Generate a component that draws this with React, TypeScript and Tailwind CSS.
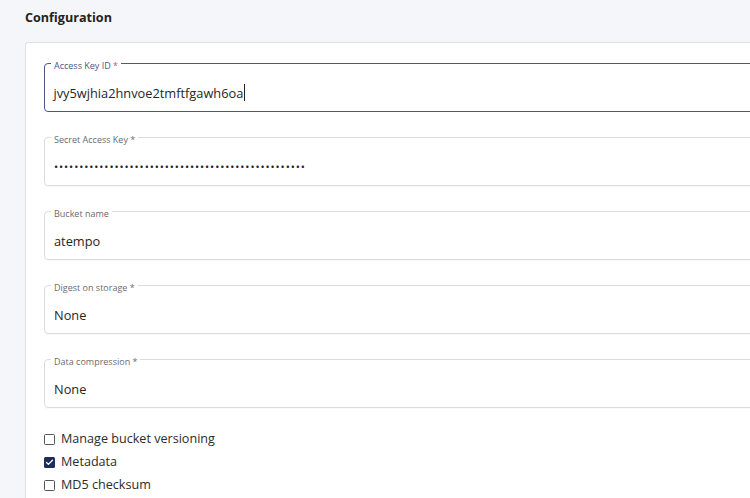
import { Check } from 'lucide-react';

type Field = {
  label: string;
  value: string;
  required?: boolean;
  focused?: boolean;
  secret?: boolean;
};

const FIELDS: Field[] = [
  { label: 'Access Key ID', value: 'jvy5wjhia2hnvoe2tmftfgawh6oa', required: true, focused: true },
  { label: 'Secret Access Key', value: '•'.repeat(50), required: true, secret: true },
  { label: 'Bucket name', value: 'atempo' },
  { label: 'Digest on storage', value: 'None', required: true },
  { label: 'Data compression', value: 'None', required: true },
];

const OPTIONS = [
  { label: 'Manage bucket versioning', checked: false },
  { label: 'Metadata', checked: true },
  { label: 'MD5 checksum', checked: false },
];

function OutlinedField({ field }: { field: Field }) {
  return (
    <div
      className={
        field.focused
          ? 'relative h-[49px] rounded-[4px] border-[1.5px] border-[#4f5882] pl-[8.5px] pt-[19.5px]'
          : 'relative h-[49px] rounded-[4px] border border-[#dcdcdf] pl-[9px] pt-[20px] shadow-[0_1px_1px_rgba(0,0,0,0.03)]'
      }
    >
      <span
        className={`absolute left-[6px] top-[-3px] bg-white px-[3px] text-[9px] leading-[10px] ${
          field.focused ? 'text-[#4a5585]' : 'text-[#6b6b70]'
        }`}
      >
        {field.label}
        {field.required && <span className={field.focused ? 'text-[#d2505a]' : ''}> *</span>}
      </span>
      <div
        className={`flex items-center text-[#262626] ${
          field.secret ? 'text-[11px] leading-[18px] tracking-[0.9px]' : 'text-[12.8px] leading-[18px]'
        }`}
      >
        {field.value}
        {field.focused && <span className="ml-[1px] inline-block h-[17px] w-px bg-[#222]" />}
      </div>
    </div>
  );
}

export default function App() {
  return (
    <div
      className="h-[498px] w-[750px] overflow-hidden bg-[#f5f6fa]"
      style={{ fontFamily: '"Open Sans", "Liberation Sans", sans-serif' }}
    >
      <div className="flex h-[42px] items-center pl-[25px] pb-[5px] text-[12.6px] font-bold text-[#222]">
        Configuration
      </div>
      <div className="ml-[25px] h-[456px] rounded-tl-[3px] border-l border-t border-[#dfe0e4] bg-white pl-[18px] pt-[20px]">
        <div className="-mr-[20px] flex flex-col gap-[25px]">
          {FIELDS.map(f => (
            <OutlinedField key={f.label} field={f} />
          ))}
        </div>
        <div className="mt-[22px] flex flex-col gap-[5px]">
          {OPTIONS.map(o => (
            <label key={o.label} className="flex h-[18px] items-center gap-[6px] text-[12.6px] text-[#2b2b2b]">
              {o.checked ? (
                <span className="flex h-[11px] w-[11px] items-center justify-center rounded-[1.5px] bg-[#1d2d5c]">
                  <Check size={9} strokeWidth={3.5} className="text-white" />
                </span>
              ) : (
                <span className="h-[11px] w-[11px] rounded-[1.5px] border border-[#555]" />
              )}
              {o.label}
            </label>
          ))}
        </div>
      </div>
    </div>
  );
}
